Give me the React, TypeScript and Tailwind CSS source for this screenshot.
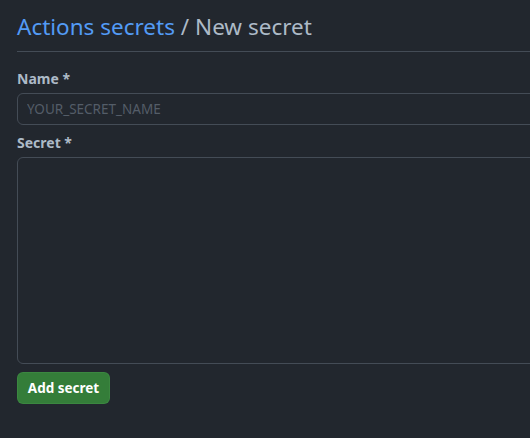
export default function App() {
  return (
    <div
      className="min-h-[438px] w-[530px] overflow-hidden bg-[#22272e] pl-[17px] text-[#adbac7]"
      style={{ fontFamily: '"Noto Sans", "Open Sans", sans-serif' }}
    >
      <div className="w-[560px]">
        <h1 className="border-b border-[#444c56] pt-[9px] pb-[6px] text-[22.5px] font-normal leading-[36px]">
          <a href="#" className="text-[#539bf5]">
            Actions secrets
          </a>{' '}
          / New secret
        </h1>

        <form className="pt-[16px]">
          <label className="block text-[14px] font-bold leading-[21px]">Name *</label>
          <input
            type="text"
            placeholder="YOUR_SECRET_NAME"
            className="mt-[4px] block h-[32px] w-full rounded-[6px] border border-[#444c56] bg-[#22272e] px-[9px] text-[13.5px] text-[#adbac7] placeholder:text-[#545d68] outline-none"
          />

          <label className="mt-[7px] block text-[14px] font-bold leading-[21px]">Secret *</label>
          <textarea className="mt-[4px] block h-[207px] w-full resize-none rounded-[6px] border border-[#444c56] bg-[#22272e] px-[12px] py-[8px] text-[14px] text-[#adbac7] outline-none" />

          <button
            type="button"
            className="mt-[8px] h-[32px] w-[93px] rounded-[6px] border border-[#46954a66] bg-[#347d39] text-[13.5px] font-bold text-white"
          >
            Add secret
          </button>
        </form>
      </div>
    </div>
  );
}
